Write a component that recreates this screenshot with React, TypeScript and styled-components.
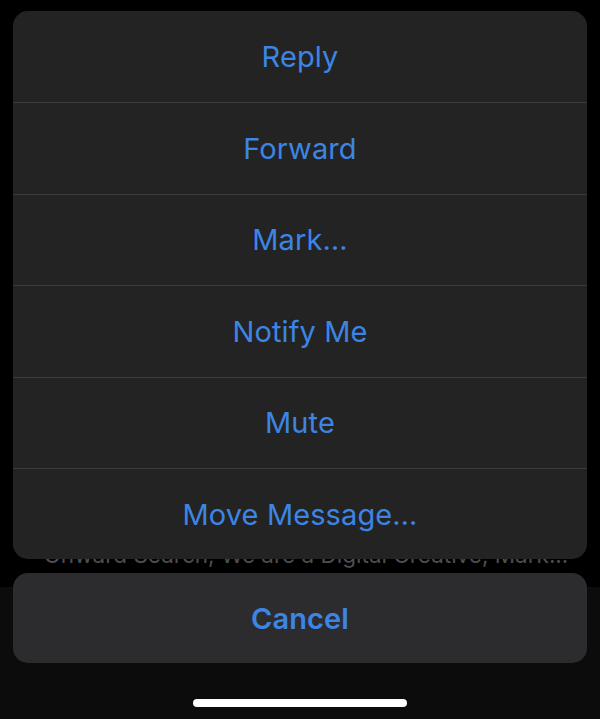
import styled, { createGlobalStyle } from 'styled-components';

const GlobalStyle = createGlobalStyle`
    html, body {
        margin: 0;
        padding: 0;
        background: #000;
        font-family: Inter, "Noto Sans", sans-serif;
    }
`;

const Screen = styled.div`
    position: relative;
    width: 600px;
    height: 719px;
    overflow: hidden;
    background: #000;
`;

/* what sits behind the sheet */
const Backdrop = styled.div`
    display: flex;
    flex-direction: column;
    height: 100%;
`;
const Preview = styled.div`
    flex: 1;
    display: flex;
    align-items: flex-end;
    justify-content: center;
    padding: 0 16px 19px 28px;
    color: #4e4e50;
    font-size: 22.5px;
    white-space: nowrap;
`;
const Toolbar = styled.div`
    height: 132px;
    background: #0c0c0c;
`;

/* the action sheet over it */
const Overlay = styled.div`
    position: absolute;
    inset: 0;
    display: flex;
    flex-direction: column;
    padding: 11px 13px 0 13px;
`;
const Group = styled.div<{ $tone: string }>`
    display: flex;
    flex-direction: column;
    background: ${p => p.$tone};
    border-radius: 15px;
    overflow: hidden;
`;
const Action = styled.div<{ $bold?: boolean; $h?: number }>`
    box-sizing: border-box;
    height: ${p => p.$h ?? 91.4}px;
    display: flex;
    align-items: center;
    justify-content: center;
    color: #3d85e4;
    font-size: 29px;
    font-weight: ${p => (p.$bold ? 600 : 400)};
    letter-spacing: 0.1px;
    & + & {
        border-top: 1px solid #3b3b3d;
    }
`;
const Gap = styled.div`
    height: 14px;
`;
const HomeBar = styled.div`
    margin: 36px auto 0;
    width: 214px;
    height: 8px;
    border-radius: 4px;
    background: #fff;
`;

const actions = ['Reply', 'Forward', 'Mark…', 'Notify Me', 'Mute', 'Move Message…'];

export default function App() {
    return (
        <Screen>
            <GlobalStyle />
            <Backdrop>
                <Preview>Onward Search, We are a Digital Creative, Mark...</Preview>
                <Toolbar />
            </Backdrop>
            <Overlay>
                <Group $tone="#232323">
                    {actions.map(a => (
                        <Action key={a}>{a}</Action>
                    ))}
                </Group>
                <Gap />
                <Group $tone="#2c2c2e">
                    <Action $bold $h={90}>Cancel</Action>
                </Group>
                <HomeBar />
            </Overlay>
        </Screen>
    );
}
